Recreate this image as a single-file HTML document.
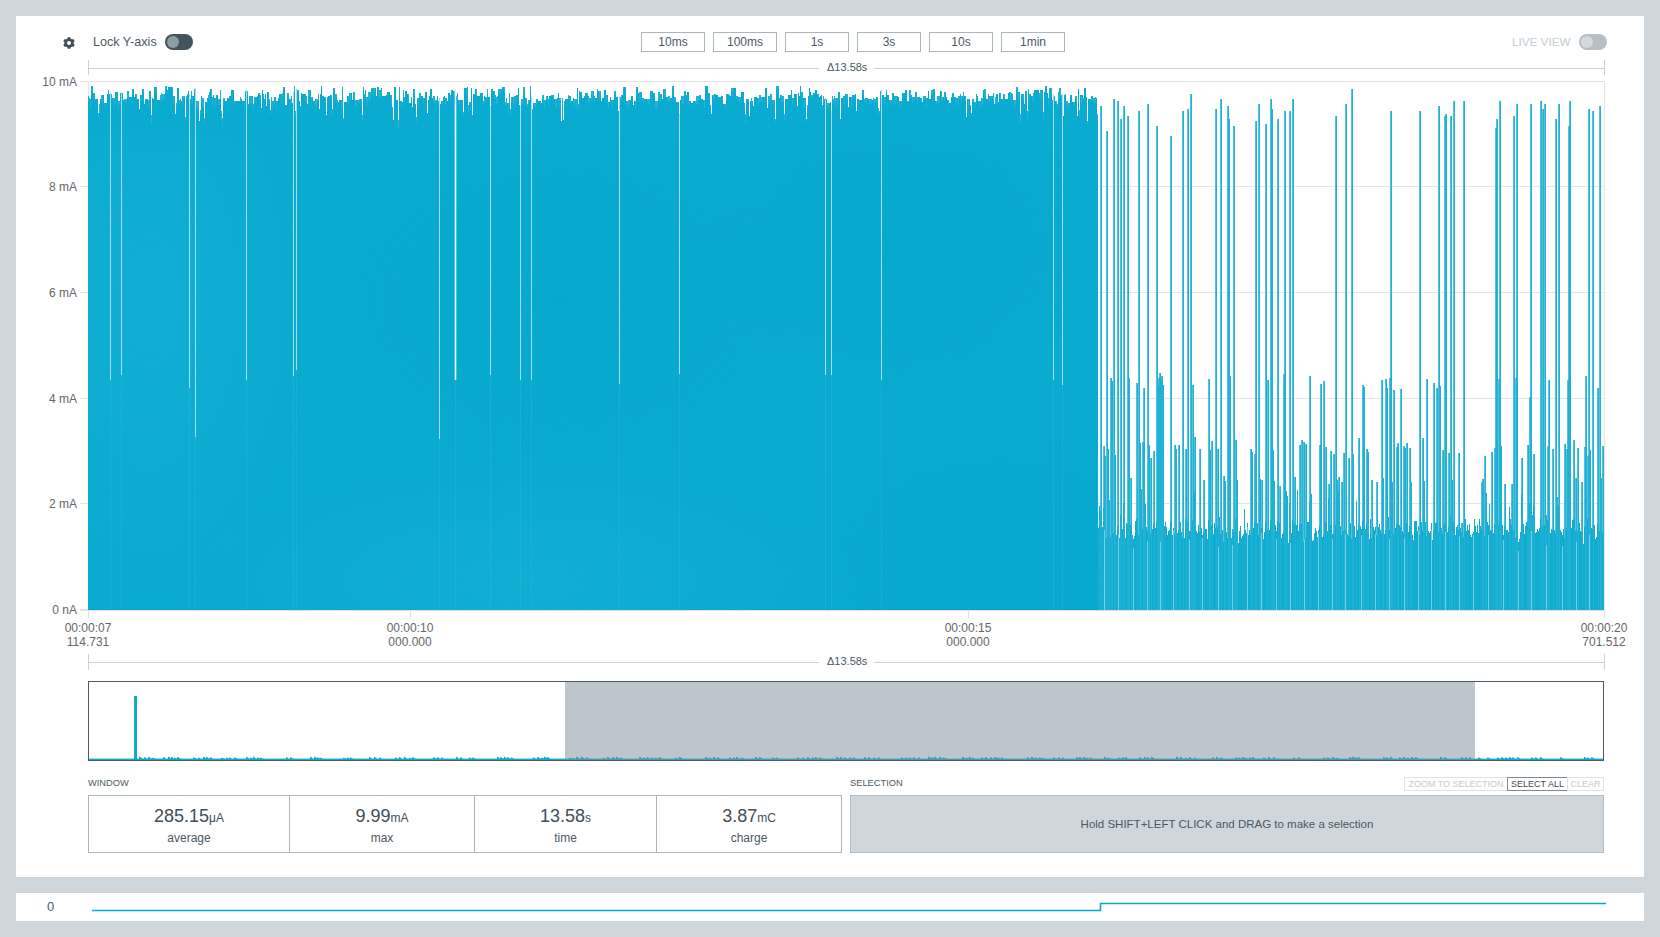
<!DOCTYPE html>
<html><head><meta charset="utf-8">
<style>
*{box-sizing:border-box;margin:0;padding:0}
html,body{width:1660px;height:937px;overflow:hidden;background:#cfd6dc;font-family:"Liberation Sans",sans-serif;color:#4a5963}
.abs{position:absolute}
.card{position:absolute;background:#fff}
.t{position:absolute;white-space:nowrap;line-height:1}
.btn{position:absolute;top:32px;width:64px;height:20px;border:1px solid #aab5bc;font-size:12px;line-height:18px;text-align:center;color:#4a5963}
.ax{position:absolute;font-size:12px;line-height:14px;color:#666;white-space:nowrap}
.stat{position:absolute;top:795px;height:58px;border:1px solid #a9b6bd;text-align:center}
.stat .v{position:absolute;left:0;right:0;top:10px;font-size:18px;line-height:20px;color:#3f4e58}
.stat .v small{font-size:12px}
.stat .l{position:absolute;left:0;right:0;top:35px;font-size:12px;line-height:14px;color:#4a5963}
.sb{position:absolute;top:777px;height:14px;font-size:9px;line-height:12px;border:1px solid #dde3e6;color:#c3cbd0;text-align:center}
</style></head><body>
<div class="card" style="left:16px;top:16px;width:1628px;height:861px"></div>
<div class="card" style="left:16px;top:893px;width:1628px;height:28px"></div>

<!-- gear -->
<svg class="abs" style="left:62px;top:36px" width="14" height="14" viewBox="0 0 14 14">
<path fill="#3f4e58" fill-rule="evenodd" d="M8.61 2.58L8.35 1.15L5.65 1.15L5.39 2.58L3.98 3.40L2.61 2.91L1.26 5.25L2.37 6.18L2.37 7.82L1.26 8.75L2.61 11.09L3.98 10.60L5.39 11.42L5.65 12.85L8.35 12.85L8.61 11.42L10.02 10.60L11.39 11.09L12.74 8.75L11.63 7.82L11.63 6.18L12.74 5.25L11.39 2.91L10.02 3.40ZM7 5A2 2 0 1 0 7 9A2 2 0 1 0 7 5Z"/>
</svg>
<div class="t" style="left:93px;top:36px;font-size:12.6px;color:#4a5963">Lock Y-axis</div>
<div class="abs" style="left:165px;top:34px;width:28px;height:16px;border-radius:8px;background:#44545e"></div>
<div class="abs" style="left:167px;top:36px;width:12px;height:12px;border-radius:6px;background:#8d9da5"></div>

<div class="btn" style="left:641px">10ms</div>
<div class="btn" style="left:713px">100ms</div>
<div class="btn" style="left:785px">1s</div>
<div class="btn" style="left:857px">3s</div>
<div class="btn" style="left:929px">10s</div>
<div class="btn" style="left:1001px">1min</div>

<div class="t" style="left:1512px;top:36px;font-size:11.7px;color:#c4cdd2">LIVE VIEW</div>
<div class="abs" style="left:1579px;top:34px;width:28px;height:16px;border-radius:8px;background:#b6bfc4"></div>
<div class="abs" style="left:1581px;top:36px;width:12px;height:12px;border-radius:6px;background:#d3d9dc"></div>

<!-- delta top -->
<svg class="abs" style="left:0;top:55px" width="1660" height="20" viewBox="0 55 1660 20">
<path d="M88 68.5H819M874 68.5H1605M88.5 60V76M1604.5 60V76" stroke="#c9d2d7" stroke-width="1"/>
</svg>
<div class="t" style="left:827px;top:62px;font-size:11px;color:#4a5963">Δ13.58s</div>

<svg class="abs" style="left:0;top:0" width="1660" height="700" viewBox="0 0 1660 700">
<path d="M80 81.5H1605M80 186.5H1605M80 292.5H1605M80 398.5H1605M80 503.5H1605M80 609.5H88" stroke="#e4e4e4" stroke-width="1" fill="none"/>
<path d="M1604.5 81V610M88.5 81V610" stroke="#e4e4e4" stroke-width="1"/>
<path d="M80 610.5H1605M88.5 610V618M410.5 610V618M968.5 610V618M1604.5 610V618" stroke="#e0e0e0" stroke-width="1"/>
<g fill="none" stroke-width="1">
<path d="M88.5 96V610M89.5 98V610M90.5 99V610M91.5 86V610M92.5 86V610M93.5 93V610M94.5 93V610M95.5 99V610M96.5 99V610M97.5 99V610M98.5 113V610M99.5 104V610M100.5 99V610M101.5 95V610M102.5 95V610M103.5 95V610M104.5 103V610M105.5 103V610M106.5 103V610M107.5 94V610M108.5 90V610M109.5 94V610M110.5 94V610M111.5 94V610M112.5 98V610M113.5 98V610M114.5 98V610M115.5 92V610M116.5 92V610M117.5 92V610M118.5 101V610M119.5 101V610M120.5 93V610M121.5 93V610M122.5 93V610M123.5 100V610M124.5 99V610M125.5 99V610M126.5 99V610M127.5 91V610M128.5 91V610M129.5 97V610M130.5 97V610M131.5 97V610M132.5 89V610M133.5 89V610M134.5 97V610M135.5 94V610M136.5 94V610M137.5 99V610M138.5 99V610M139.5 109V610M140.5 95V610M141.5 95V610M142.5 89V610M143.5 89V610M144.5 104V610M145.5 99V610M146.5 99V610M147.5 99V610M148.5 100V610M149.5 91V610M150.5 91V610M151.5 115V610M152.5 98V610M153.5 99V610M154.5 87V610M155.5 87V610M156.5 87V610M157.5 100V610M158.5 100V610M159.5 100V610M160.5 95V610M161.5 93V610M162.5 94V610M163.5 94V610M164.5 94V610M165.5 86V610M166.5 86V610M167.5 90V610M168.5 87V610M169.5 87V610M170.5 87V610M171.5 87V610M172.5 87V610M173.5 96V610M174.5 96V610M175.5 114V610M176.5 103V610M177.5 88V610M178.5 88V610M179.5 100V610M180.5 99V610M181.5 101V610M182.5 96V610M183.5 96V610M184.5 96V610M185.5 117V610M186.5 96V610M187.5 94V610M188.5 91V610M189.5 96V610M190.5 99V610M191.5 91V610M192.5 96V610M193.5 96V610M194.5 89V610M195.5 89V610M196.5 101V610M197.5 101V610M198.5 101V610M199.5 121V610M200.5 110V610M201.5 96V610M202.5 98V610M203.5 98V610M204.5 118V610M205.5 102V610M206.5 102V610M207.5 98V610M208.5 95V610M209.5 92V610M210.5 89V610M211.5 89V610M212.5 97V610M213.5 95V610M214.5 98V610M215.5 98V610M216.5 95V610M217.5 95V610M218.5 99V610M219.5 99V610M220.5 90V610M221.5 111V610M222.5 118V610M223.5 98V610M224.5 98V610M225.5 101V610M226.5 101V610M227.5 98V610M228.5 98V610M229.5 96V610M230.5 96V610M231.5 90V610M232.5 90V610M233.5 90V610M234.5 101V610M235.5 101V610M236.5 101V610M237.5 101V610M238.5 101V610M239.5 101V610M240.5 97V610M241.5 99V610M242.5 101V610M243.5 101V610M244.5 101V610M245.5 91V610M246.5 91V610M247.5 91V610M248.5 104V610M249.5 96V610M250.5 96V610M251.5 96V610M252.5 96V610M253.5 104V610M254.5 97V610M255.5 97V610M256.5 97V610M257.5 96V610M258.5 93V610M259.5 93V610M260.5 95V610M261.5 108V610M262.5 90V610M263.5 94V610M264.5 99V610M265.5 94V610M266.5 106V610M267.5 92V610M268.5 92V610M269.5 99V610M270.5 110V610M271.5 97V610M272.5 101V610M273.5 101V610M274.5 97V610M275.5 97V610M276.5 101V610M277.5 101V610M278.5 98V610M279.5 94V610M280.5 94V610M281.5 94V610M282.5 93V610M283.5 87V610M284.5 87V610M285.5 105V610M286.5 105V610M287.5 93V610M288.5 93V610M289.5 99V610M290.5 99V610M291.5 96V610M292.5 103V610M293.5 93V610M294.5 86V610M295.5 111V610M296.5 90V610M297.5 90V610M298.5 90V610M299.5 101V610M300.5 106V610M301.5 93V610M302.5 94V610M303.5 94V610M304.5 94V610M305.5 94V610M306.5 96V610M307.5 104V610M308.5 90V610M309.5 90V610M310.5 90V610M311.5 97V610M312.5 97V610M313.5 101V610M314.5 101V610M315.5 99V610M316.5 99V610M317.5 99V610M318.5 94V610M319.5 109V610M320.5 94V610M321.5 86V610M322.5 96V610M323.5 96V610M324.5 97V610M325.5 97V610M326.5 115V610M327.5 97V610M328.5 96V610M329.5 96V610M330.5 95V610M331.5 95V610M332.5 109V610M333.5 88V610M334.5 88V610M335.5 94V610M336.5 94V610M337.5 100V610M338.5 102V610M339.5 100V610M340.5 100V610M341.5 100V610M342.5 87V610M343.5 118V610M344.5 102V610M345.5 102V610M346.5 102V610M347.5 96V610M348.5 96V610M349.5 93V610M350.5 93V610M351.5 93V610M352.5 100V610M353.5 92V610M354.5 92V610M355.5 100V610M356.5 100V610M357.5 100V610M358.5 100V610M359.5 99V610M360.5 99V610M361.5 99V610M362.5 115V610M363.5 87V610M364.5 94V610M365.5 90V610M366.5 97V610M367.5 97V610M368.5 92V610M369.5 92V610M370.5 92V610M371.5 88V610M372.5 88V610M373.5 88V610M374.5 88V610M375.5 88V610M376.5 96V610M377.5 87V610M378.5 87V610M379.5 90V610M380.5 90V610M381.5 88V610M382.5 96V610M383.5 96V610M384.5 96V610M385.5 96V610M386.5 95V610M387.5 92V610M388.5 92V610M389.5 92V610M390.5 95V610M391.5 95V610M392.5 107V610M393.5 120V610M394.5 87V610M395.5 87V610M396.5 100V610M397.5 100V610M398.5 120V610M399.5 87V610M400.5 101V610M401.5 101V610M402.5 102V610M403.5 90V610M404.5 97V610M405.5 91V610M406.5 91V610M407.5 94V610M408.5 94V610M409.5 103V610M410.5 103V610M411.5 97V610M412.5 107V610M413.5 89V610M414.5 89V610M415.5 104V610M416.5 117V610M417.5 98V610M418.5 98V610M419.5 93V610M420.5 93V610M421.5 96V610M422.5 96V610M423.5 98V610M424.5 98V610M425.5 92V610M426.5 92V610M427.5 113V610M428.5 100V610M429.5 96V610M430.5 89V610M431.5 89V610M432.5 98V610M433.5 96V610M434.5 96V610M435.5 100V610M436.5 100V610M437.5 96V610M438.5 101V610M439.5 99V610M440.5 104V610M441.5 101V610M442.5 101V610M443.5 97V610M444.5 96V610M445.5 98V610M446.5 98V610M447.5 101V610M448.5 93V610M449.5 93V610M450.5 95V610M451.5 90V610M452.5 90V610M453.5 91V610M454.5 91V610M455.5 91V610M456.5 96V610M457.5 93V610M458.5 100V610M459.5 100V610M460.5 100V610M461.5 100V610M462.5 100V610M463.5 112V610M464.5 88V610M465.5 88V610M466.5 88V610M467.5 87V610M468.5 105V610M469.5 102V610M470.5 102V610M471.5 88V610M472.5 115V610M473.5 94V610M474.5 94V610M475.5 89V610M476.5 89V610M477.5 96V610M478.5 96V610M479.5 96V610M480.5 93V610M481.5 93V610M482.5 93V610M483.5 101V610M484.5 96V610M485.5 97V610M486.5 97V610M487.5 89V610M488.5 97V610M489.5 97V610M490.5 107V610M491.5 89V610M492.5 89V610M493.5 91V610M494.5 91V610M495.5 95V610M496.5 97V610M497.5 96V610M498.5 89V610M499.5 89V610M500.5 89V610M501.5 89V610M502.5 87V610M503.5 87V610M504.5 87V610M505.5 102V610M506.5 98V610M507.5 103V610M508.5 103V610M509.5 93V610M510.5 109V610M511.5 97V610M512.5 97V610M513.5 97V610M514.5 96V610M515.5 96V610M516.5 95V610M517.5 95V610M518.5 88V610M519.5 105V610M520.5 107V610M521.5 99V610M522.5 99V610M523.5 87V610M524.5 87V610M525.5 98V610M526.5 98V610M527.5 104V610M528.5 100V610M529.5 100V610M530.5 86V610M531.5 98V610M532.5 109V610M533.5 103V610M534.5 103V610M535.5 103V610M536.5 99V610M537.5 99V610M538.5 101V610M539.5 101V610M540.5 101V610M541.5 103V610M542.5 95V610M543.5 95V610M544.5 100V610M545.5 100V610M546.5 96V610M547.5 96V610M548.5 99V610M549.5 96V610M550.5 96V610M551.5 95V610M552.5 95V610M553.5 95V610M554.5 99V610M555.5 99V610M556.5 99V610M557.5 98V610M558.5 93V610M559.5 98V610M560.5 98V610M561.5 121V610M562.5 98V610M563.5 120V610M564.5 101V610M565.5 99V610M566.5 99V610M567.5 99V610M568.5 95V610M569.5 96V610M570.5 96V610M571.5 101V610M572.5 101V610M573.5 98V610M574.5 99V610M575.5 99V610M576.5 99V610M577.5 88V610M578.5 104V610M579.5 91V610M580.5 92V610M581.5 92V610M582.5 98V610M583.5 98V610M584.5 96V610M585.5 93V610M586.5 93V610M587.5 93V610M588.5 96V610M589.5 98V610M590.5 98V610M591.5 91V610M592.5 91V610M593.5 91V610M594.5 96V610M595.5 98V610M596.5 98V610M597.5 89V610M598.5 91V610M599.5 91V610M600.5 91V610M601.5 101V610M602.5 98V610M603.5 98V610M604.5 90V610M605.5 90V610M606.5 95V610M607.5 95V610M608.5 102V610M609.5 102V610M610.5 97V610M611.5 100V610M612.5 100V610M613.5 100V610M614.5 91V610M615.5 91V610M616.5 97V610M617.5 97V610M618.5 111V610M619.5 97V610M620.5 97V610M621.5 95V610M622.5 95V610M623.5 87V610M624.5 87V610M625.5 87V610M626.5 101V610M627.5 101V610M628.5 100V610M629.5 100V610M630.5 100V610M631.5 96V610M632.5 96V610M633.5 105V610M634.5 101V610M635.5 101V610M636.5 87V610M637.5 87V610M638.5 93V610M639.5 92V610M640.5 92V610M641.5 92V610M642.5 98V610M643.5 98V610M644.5 99V610M645.5 99V610M646.5 99V610M647.5 99V610M648.5 99V610M649.5 99V610M650.5 91V610M651.5 91V610M652.5 91V610M653.5 93V610M654.5 93V610M655.5 101V610M656.5 101V610M657.5 101V610M658.5 92V610M659.5 92V610M660.5 94V610M661.5 94V610M662.5 99V610M663.5 89V610M664.5 89V610M665.5 89V610M666.5 97V610M667.5 97V610M668.5 96V610M669.5 96V610M670.5 98V610M671.5 98V610M672.5 86V610M673.5 86V610M674.5 97V610M675.5 97V610M676.5 102V610M677.5 102V610M678.5 102V610M679.5 115V610M680.5 100V610M681.5 96V610M682.5 96V610M683.5 96V610M684.5 91V610M685.5 91V610M686.5 95V610M687.5 92V610M688.5 92V610M689.5 101V610M690.5 101V610M691.5 103V610M692.5 103V610M693.5 101V610M694.5 101V610M695.5 101V610M696.5 96V610M697.5 96V610M698.5 96V610M699.5 95V610M700.5 95V610M701.5 99V610M702.5 99V610M703.5 100V610M704.5 100V610M705.5 86V610M706.5 86V610M707.5 86V610M708.5 93V610M709.5 93V610M710.5 105V610M711.5 114V610M712.5 95V610M713.5 95V610M714.5 94V610M715.5 94V610M716.5 95V610M717.5 95V610M718.5 97V610M719.5 97V610M720.5 97V610M721.5 96V610M722.5 96V610M723.5 104V610M724.5 104V610M725.5 104V610M726.5 94V610M727.5 94V610M728.5 94V610M729.5 95V610M730.5 96V610M731.5 88V610M732.5 88V610M733.5 88V610M734.5 88V610M735.5 88V610M736.5 96V610M737.5 96V610M738.5 97V610M739.5 97V610M740.5 97V610M741.5 92V610M742.5 92V610M743.5 92V610M744.5 103V610M745.5 114V610M746.5 99V610M747.5 99V610M748.5 99V610M749.5 116V610M750.5 101V610M751.5 98V610M752.5 101V610M753.5 106V610M754.5 97V610M755.5 97V610M756.5 97V610M757.5 98V610M758.5 98V610M759.5 95V610M760.5 95V610M761.5 97V610M762.5 97V610M763.5 97V610M764.5 97V610M765.5 88V610M766.5 88V610M767.5 108V610M768.5 96V610M769.5 96V610M770.5 94V610M771.5 94V610M772.5 100V610M773.5 100V610M774.5 100V610M775.5 119V610M776.5 86V610M777.5 86V610M778.5 86V610M779.5 98V610M780.5 95V610M781.5 95V610M782.5 96V610M783.5 96V610M784.5 114V610M785.5 99V610M786.5 99V610M787.5 99V610M788.5 95V610M789.5 95V610M790.5 95V610M791.5 90V610M792.5 98V610M793.5 98V610M794.5 94V610M795.5 94V610M796.5 94V610M797.5 106V610M798.5 93V610M799.5 96V610M800.5 86V610M801.5 92V610M802.5 92V610M803.5 98V610M804.5 98V610M805.5 98V610M806.5 119V610M807.5 105V610M808.5 96V610M809.5 88V610M810.5 92V610M811.5 95V610M812.5 95V610M813.5 93V610M814.5 93V610M815.5 90V610M816.5 90V610M817.5 94V610M818.5 94V610M819.5 97V610M820.5 96V610M821.5 95V610M822.5 105V610M823.5 96V610M824.5 99V610M825.5 99V610M826.5 99V610M827.5 103V610M828.5 103V610M829.5 103V610M830.5 102V610M831.5 112V610M832.5 96V610M833.5 99V610M834.5 96V610M835.5 98V610M836.5 98V610M837.5 98V610M838.5 92V610M839.5 92V610M840.5 119V610M841.5 98V610M842.5 98V610M843.5 96V610M844.5 96V610M845.5 94V610M846.5 94V610M847.5 94V610M848.5 107V610M849.5 97V610M850.5 97V610M851.5 97V610M852.5 95V610M853.5 95V610M854.5 95V610M855.5 94V610M856.5 111V610M857.5 99V610M858.5 99V610M859.5 100V610M860.5 100V610M861.5 100V610M862.5 90V610M863.5 90V610M864.5 99V610M865.5 98V610M866.5 98V610M867.5 98V610M868.5 99V610M869.5 99V610M870.5 99V610M871.5 99V610M872.5 100V610M873.5 98V610M874.5 99V610M875.5 99V610M876.5 97V610M877.5 97V610M878.5 108V610M879.5 111V610M880.5 91V610M881.5 91V610M882.5 95V610M883.5 95V610M884.5 97V610M885.5 97V610M886.5 90V610M887.5 95V610M888.5 95V610M889.5 100V610M890.5 100V610M891.5 100V610M892.5 93V610M893.5 93V610M894.5 96V610M895.5 96V610M896.5 96V610M897.5 96V610M898.5 97V610M899.5 101V610M900.5 101V610M901.5 101V610M902.5 93V610M903.5 93V610M904.5 93V610M905.5 90V610M906.5 90V610M907.5 101V610M908.5 101V610M909.5 90V610M910.5 90V610M911.5 95V610M912.5 97V610M913.5 97V610M914.5 97V610M915.5 92V610M916.5 92V610M917.5 97V610M918.5 97V610M919.5 97V610M920.5 98V610M921.5 98V610M922.5 102V610M923.5 96V610M924.5 96V610M925.5 96V610M926.5 98V610M927.5 98V610M928.5 91V610M929.5 99V610M930.5 99V610M931.5 90V610M932.5 90V610M933.5 89V610M934.5 89V610M935.5 101V610M936.5 101V610M937.5 96V610M938.5 96V610M939.5 96V610M940.5 91V610M941.5 91V610M942.5 97V610M943.5 97V610M944.5 92V610M945.5 92V610M946.5 97V610M947.5 100V610M948.5 100V610M949.5 103V610M950.5 103V610M951.5 97V610M952.5 93V610M953.5 93V610M954.5 97V610M955.5 97V610M956.5 98V610M957.5 98V610M958.5 96V610M959.5 96V610M960.5 94V610M961.5 96V610M962.5 96V610M963.5 92V610M964.5 96V610M965.5 96V610M966.5 117V610M967.5 99V610M968.5 99V610M969.5 99V610M970.5 105V610M971.5 113V610M972.5 99V610M973.5 99V610M974.5 102V610M975.5 102V610M976.5 94V610M977.5 96V610M978.5 101V610M979.5 101V610M980.5 101V610M981.5 98V610M982.5 98V610M983.5 90V610M984.5 89V610M985.5 89V610M986.5 99V610M987.5 99V610M988.5 94V610M989.5 96V610M990.5 96V610M991.5 96V610M992.5 96V610M993.5 93V610M994.5 104V610M995.5 97V610M996.5 94V610M997.5 94V610M998.5 102V610M999.5 93V610M1000.5 93V610M1001.5 99V610M1002.5 99V610M1003.5 94V610M1004.5 94V610M1005.5 99V610M1006.5 99V610M1007.5 99V610M1008.5 93V610M1009.5 92V610M1010.5 92V610M1011.5 93V610M1012.5 94V610M1013.5 100V610M1014.5 100V610M1015.5 100V610M1016.5 87V610M1017.5 87V610M1018.5 92V610M1019.5 92V610M1020.5 114V610M1021.5 94V610M1022.5 94V610M1023.5 94V610M1024.5 104V610M1025.5 91V610M1026.5 91V610M1027.5 111V610M1028.5 89V610M1029.5 94V610M1030.5 94V610M1031.5 96V610M1032.5 96V610M1033.5 93V610M1034.5 90V610M1035.5 90V610M1036.5 90V610M1037.5 90V610M1038.5 90V610M1039.5 93V610M1040.5 90V610M1041.5 90V610M1042.5 90V610M1043.5 112V610M1044.5 92V610M1045.5 86V610M1046.5 86V610M1047.5 93V610M1048.5 98V610M1049.5 88V610M1050.5 88V610M1051.5 88V610M1052.5 100V610M1053.5 95V610M1054.5 96V610M1055.5 101V610M1056.5 101V610M1057.5 104V610M1058.5 92V610M1059.5 88V610M1060.5 88V610M1061.5 95V610M1062.5 95V610M1063.5 116V610M1064.5 95V610M1065.5 94V610M1066.5 101V610M1067.5 101V610M1068.5 103V610M1069.5 103V610M1070.5 95V610M1071.5 95V610M1072.5 102V610M1073.5 102V610M1074.5 102V610M1075.5 96V610M1076.5 96V610M1077.5 116V610M1078.5 89V610M1079.5 110V610M1080.5 95V610M1081.5 95V610M1082.5 95V610M1083.5 98V610M1084.5 88V610M1085.5 88V610M1086.5 97V610M1087.5 121V610M1088.5 99V610M1089.5 99V610M1090.5 99V610M1091.5 96V610M1092.5 96V610M1093.5 98V610M1094.5 98V610M1095.5 97V610M1096.5 98V610M1097.5 114V610" stroke="#0aabd0"/>
<path d="M88.5 96v6M90.5 99v9M91.5 86v3M92.5 86v7M94.5 93v9M98.5 113v4M99.5 104v9M101.5 95v7M102.5 95v9M104.5 103v3M108.5 90v6M110.5 94v7M111.5 94v5M113.5 98v3M114.5 98v9M118.5 101v9M119.5 101v3M124.5 99v3M125.5 99v4M126.5 99v3M127.5 91v7M128.5 91v8M132.5 89v7M136.5 94v5M141.5 95v6M143.5 89v4M145.5 99v3M148.5 100v7M151.5 115v9M156.5 87v5M160.5 95v7M161.5 93v8M162.5 94v5M163.5 94v6M164.5 94v6M165.5 86v6M166.5 86v4M172.5 87v9M173.5 96v7M176.5 103v6M179.5 100v3M182.5 96v9M183.5 96v3M185.5 117v4M187.5 94v6M189.5 96v9M190.5 99v6M191.5 91v4M192.5 96v7M194.5 89v4M195.5 89v3M196.5 101v6M197.5 101v7M198.5 101v9M200.5 110v6M202.5 98v9M203.5 98v5M204.5 118v5M207.5 98v5M208.5 95v4M209.5 92v8M211.5 89v8M212.5 97v9M215.5 98v9M218.5 99v6M219.5 99v6M220.5 90v7M221.5 111v9M222.5 118v9M223.5 98v4M224.5 98v3M229.5 96v4M234.5 101v3M240.5 97v5M244.5 101v9M247.5 91v4M250.5 96v8M251.5 96v7M253.5 104v6M255.5 97v5M259.5 93v8M263.5 94v3M269.5 99v3M270.5 110v4M271.5 97v5M272.5 101v9M274.5 97v8M276.5 101v9M281.5 94v9M282.5 93v4M283.5 87v3M287.5 93v3M288.5 93v4M290.5 99v4M291.5 96v7M293.5 93v9M294.5 86v8M295.5 111v6M298.5 90v3M300.5 106v4M306.5 96v6M308.5 90v7M309.5 90v8M311.5 97v6M313.5 101v3M315.5 99v6M316.5 99v8M317.5 99v4M318.5 94v6M325.5 97v8M331.5 95v3M332.5 109v7M333.5 88v4M335.5 94v5M336.5 94v4M337.5 100v7M341.5 100v7M343.5 118v3M348.5 96v8M349.5 93v7M350.5 93v6M354.5 92v8M355.5 100v7M356.5 100v6M358.5 100v4M359.5 99v4M361.5 99v7M362.5 115v5M363.5 87v4M364.5 94v5M366.5 97v4M367.5 97v9M368.5 92v7M369.5 92v9M370.5 92v8M371.5 88v6M373.5 88v9M374.5 88v4M378.5 87v8M379.5 90v8M380.5 90v7M391.5 95v9M392.5 107v6M398.5 120v9M399.5 87v7M401.5 101v6M403.5 90v5M404.5 97v6M408.5 94v8M411.5 97v4M414.5 89v6M416.5 117v5M417.5 98v9M419.5 93v5M420.5 93v6M423.5 98v5M433.5 96v5M434.5 96v8M435.5 100v3M438.5 101v5M442.5 101v4M445.5 98v7M450.5 95v5M451.5 90v3M454.5 91v5M459.5 100v4M462.5 100v4M463.5 112v3M466.5 88v8M468.5 105v6M469.5 102v3M470.5 102v8M473.5 94v3M476.5 89v6M482.5 93v4M483.5 101v3M484.5 96v7M486.5 97v3M487.5 89v7M490.5 107v9M491.5 89v3M494.5 91v4M495.5 95v4M496.5 97v8M497.5 96v7M498.5 89v4M499.5 89v6M500.5 89v4M504.5 87v7M505.5 102v4M506.5 98v7M508.5 103v9M510.5 109v7M511.5 97v6M513.5 97v8M514.5 96v8M516.5 95v6M520.5 107v4M521.5 99v6M522.5 99v5M523.5 87v5M524.5 87v7M526.5 98v8M527.5 104v3M528.5 100v5M530.5 86v6M531.5 98v4M532.5 109v5M534.5 103v4M535.5 103v4M536.5 99v5M542.5 95v5M543.5 95v8M544.5 100v8M546.5 96v6M548.5 99v6M553.5 95v5M555.5 99v7M556.5 99v9M559.5 98v9M560.5 98v9M562.5 98v8M564.5 101v6M568.5 95v4M570.5 96v7M574.5 99v8M575.5 99v4M576.5 99v9M578.5 104v6M585.5 93v5M588.5 96v6M589.5 98v8M591.5 91v9M592.5 91v8M593.5 91v5M594.5 96v7M597.5 89v3M599.5 91v9M600.5 91v6M606.5 95v6M608.5 102v6M612.5 100v9M614.5 91v3M620.5 97v5M621.5 95v5M623.5 87v8M627.5 101v7M628.5 100v6M629.5 100v5M635.5 101v8M636.5 87v8M639.5 92v9M640.5 92v8M643.5 98v4M647.5 99v3M648.5 99v5M649.5 99v4M651.5 91v8M654.5 93v4M655.5 101v8M656.5 101v8M657.5 101v5M658.5 92v8M659.5 92v7M660.5 94v8M664.5 89v8M665.5 89v6M667.5 97v4M668.5 96v5M669.5 96v6M670.5 98v3M672.5 86v3M674.5 97v3M675.5 97v6M677.5 102v4M679.5 115v6M682.5 96v8M683.5 96v8M685.5 91v6M689.5 101v5M695.5 101v4M696.5 96v8M697.5 96v9M698.5 96v4M699.5 95v4M704.5 100v8M707.5 86v4M709.5 93v4M710.5 105v7M713.5 95v3M714.5 94v7M718.5 97v3M722.5 96v5M725.5 104v4M726.5 94v6M728.5 94v3M731.5 88v5M732.5 88v9M736.5 96v3M739.5 97v5M740.5 97v3M744.5 103v5M745.5 114v9M747.5 99v4M751.5 98v7M758.5 98v8M759.5 95v8M760.5 95v7M761.5 97v5M764.5 97v5M768.5 96v8M769.5 96v3M770.5 94v7M771.5 94v7M773.5 100v4M775.5 119v3M776.5 86v4M778.5 86v9M781.5 95v8M782.5 96v6M783.5 96v6M784.5 114v7M792.5 98v7M796.5 94v8M802.5 92v6M804.5 98v9M806.5 119v3M807.5 105v3M811.5 95v4M812.5 95v3M818.5 94v8M822.5 105v5M823.5 96v5M826.5 99v6M827.5 103v7M828.5 103v5M831.5 112v8M832.5 96v5M833.5 99v6M834.5 96v7M835.5 98v9M836.5 98v3M837.5 98v5M838.5 92v7M844.5 96v8M846.5 94v6M847.5 94v5M851.5 97v9M852.5 95v4M859.5 100v4M862.5 90v5M864.5 99v4M866.5 98v4M869.5 99v6M870.5 99v5M871.5 99v5M873.5 98v3M874.5 99v7M875.5 99v4M877.5 97v6M878.5 108v7M880.5 91v7M884.5 97v7M886.5 90v4M890.5 100v5M892.5 93v9M895.5 96v9M896.5 96v5M899.5 101v7M901.5 101v8M902.5 93v5M909.5 90v4M910.5 90v9M912.5 97v6M914.5 97v4M916.5 92v8M917.5 97v8M921.5 98v4M923.5 96v4M924.5 96v5M926.5 98v9M931.5 90v4M932.5 90v5M936.5 101v3M937.5 96v6M938.5 96v7M939.5 96v7M941.5 91v8M942.5 97v4M944.5 92v9M948.5 100v5M953.5 93v5M955.5 97v6M956.5 98v8M958.5 96v9M959.5 96v3M960.5 94v7M961.5 96v6M963.5 92v6M965.5 96v5M968.5 99v7M971.5 113v3M972.5 99v4M975.5 102v5M976.5 94v7M979.5 101v7M981.5 98v7M982.5 98v8M984.5 89v8M985.5 89v9M989.5 96v7M991.5 96v3M993.5 93v9M995.5 97v8M996.5 94v9M1000.5 93v7M1003.5 94v7M1004.5 94v4M1010.5 92v8M1011.5 93v9M1014.5 100v9M1015.5 100v4M1016.5 87v3M1017.5 87v8M1018.5 92v9M1020.5 114v9M1021.5 94v4M1023.5 94v6M1026.5 91v5M1027.5 111v8M1028.5 89v4M1029.5 94v5M1032.5 96v6M1033.5 93v7M1039.5 93v5M1040.5 90v5M1041.5 90v9M1043.5 112v8M1046.5 86v3M1048.5 98v8M1049.5 88v9M1051.5 88v6M1054.5 96v3M1056.5 101v3M1057.5 104v5M1058.5 92v8M1059.5 88v9M1060.5 88v8M1061.5 95v6M1062.5 95v8M1066.5 101v4M1067.5 101v8M1069.5 103v7M1074.5 102v5M1075.5 96v3M1076.5 96v6M1079.5 110v4M1081.5 95v8M1087.5 121v4M1090.5 99v3M1091.5 96v4M1092.5 96v5M1093.5 98v3M1094.5 98v3M1095.5 97v7M1097.5 114v5" stroke="#21b2d5"/>
<g>
<defs>
<radialGradient id="gl1"><stop offset="0" stop-color="#22b6da" stop-opacity=".3"/><stop offset="1" stop-color="#22b6da" stop-opacity="0"/></radialGradient>
<radialGradient id="gd1"><stop offset="0" stop-color="#00a2cc" stop-opacity=".25"/><stop offset="1" stop-color="#00a2cc" stop-opacity="0"/></radialGradient>
<linearGradient id="mg" x1="0" y1="0" x2="0" y2="1"><stop offset="0" stop-color="#fff" stop-opacity="0"/><stop offset=".1" stop-color="#fff" stop-opacity="1"/></linearGradient><mask id="dm"><rect x="88" y="105" width="1011" height="505" fill="url(#mg)"/></mask>
</defs>
<g mask="url(#dm)">
<ellipse cx="150" cy="300" rx="170" ry="320" fill="url(#gl1)"/>
<ellipse cx="520" cy="580" rx="330" ry="120" fill="url(#gl1)"/>
<ellipse cx="560" cy="300" rx="260" ry="180" fill="url(#gd1)"/>
<ellipse cx="1000" cy="560" rx="220" ry="140" fill="url(#gd1)"/>
<ellipse cx="900" cy="250" rx="200" ry="160" fill="url(#gd1)"/>
</g>
</g>
<path d="M110.5 93V380M121.5 92V375M189.5 95V388M195.5 88V437M246.5 90V380M293.5 92V376M296.5 89V370M439.5 98V439M455.5 90V380M490.5 106V375M520.5 106V380M531.5 97V380M619.5 96V384M679.5 114V374M825.5 98V375M831.5 111V375M881.5 90V380M1053.5 94V380M1062.5 94V385" stroke="#a6dcec"/><path d="M455.5 91V380" stroke="#f4fbfd" stroke-width="1.6"/>
<path d="M110.5 380V610M121.5 375V610M189.5 388V610M195.5 437V610M246.5 380V610M293.5 376V610M296.5 370V610M439.5 439V610M455.5 380V610M490.5 375V610M520.5 380V610M531.5 380V610M619.5 384V610M679.5 374V610M825.5 375V610M831.5 375V610M881.5 380V610M1053.5 380V610M1062.5 385V610" stroke="#3bbad9" stroke-opacity=".35"/>
<path d="M1103.5 446V610M1104.5 456V610M1107.5 449V610M1110.5 378V610M1111.5 381V610M1114.5 455V610M1128.5 378V610M1130.5 478V610M1136.5 383V610M1139.5 443V610M1142.5 442V610M1143.5 388V610M1148.5 445V610M1150.5 458V610M1153.5 451V610M1157.5 385V610M1158.5 378V610M1159.5 373V610M1160.5 380V610M1161.5 376V610M1162.5 385V610M1174.5 445V610M1175.5 449V610M1178.5 445V610M1185.5 449V610M1192.5 385V610M1194.5 437V610M1199.5 449V610M1203.5 480V610M1208.5 379V610M1209.5 450V610M1211.5 441V610M1217.5 449V610M1223.5 476V610M1224.5 481V610M1229.5 376V610M1235.5 440V610M1236.5 480V610M1250.5 449V610M1251.5 452V610M1254.5 454V610M1259.5 479V610M1261.5 480V610M1267.5 380V610M1272.5 450V610M1273.5 481V610M1279.5 486V610M1283.5 374V610M1294.5 477V610M1299.5 445V610M1301.5 440V610M1303.5 442V610M1305.5 444V610M1309.5 376V610M1319.5 445V610M1320.5 384V610M1323.5 381V610M1325.5 447V610M1328.5 484V610M1330.5 451V610M1333.5 454V610M1336.5 480V610M1338.5 477V610M1341.5 482V610M1343.5 453V610M1348.5 458V610M1352.5 454V610M1358.5 438V610M1362.5 385V610M1363.5 387V610M1366.5 449V610M1367.5 452V610M1371.5 480V610M1376.5 482V610M1381.5 380V610M1382.5 478V610M1385.5 379V610M1386.5 388V610M1389.5 378V610M1391.5 482V610M1393.5 390V610M1396.5 447V610M1397.5 443V610M1400.5 389V610M1403.5 446V610M1404.5 448V610M1406.5 443V610M1409.5 448V610M1410.5 482V610M1422.5 438V610M1423.5 481V610M1426.5 379V610M1433.5 383V610M1436.5 388V610M1439.5 386V610M1442.5 450V610M1445.5 393V610M1448.5 453V610M1451.5 480V610M1458.5 453V610M1461.5 523V610M1481.5 482V610M1482.5 479V610M1484.5 456V610M1491.5 452V610M1494.5 448V610M1498.5 379V610M1500.5 446V610M1504.5 484V610M1511.5 484V610M1515.5 378V610M1521.5 458V610M1527.5 445V610M1529.5 397V610M1533.5 454V610M1547.5 446V610M1548.5 380V610M1552.5 449V610M1564.5 444V610M1566.5 449V610M1567.5 380V610M1573.5 440V610M1575.5 478V610M1577.5 448V610M1581.5 482V610M1584.5 447V610M1585.5 376V610M1587.5 456V610M1589.5 450V610M1597.5 388V610M1600.5 478V610M1602.5 446V610M1100.5 106V610M1106.5 131V610M1113.5 99V610M1117.5 101V610M1120.5 119V610M1123.5 106V610M1127.5 116V610M1138.5 111V610M1147.5 104V610M1156.5 126V610M1170.5 136V610M1182.5 111V610M1187.5 109V610M1190.5 94V610M1215.5 109V610M1220.5 99V610M1227.5 106V610M1228.5 119V610M1233.5 126V610M1255.5 121V610M1258.5 104V610M1265.5 124V610M1270.5 99V610M1271.5 109V610M1277.5 119V610M1284.5 111V610M1289.5 111V610M1292.5 99V610M1335.5 116V610M1345.5 104V610M1351.5 89V610M1390.5 111V610M1419.5 111V610M1438.5 106V610M1444.5 116V610M1445.5 114V610M1450.5 116V610M1453.5 101V610M1463.5 101V610M1495.5 128V610M1496.5 119V610M1499.5 101V610M1513.5 116V610M1516.5 104V610M1530.5 104V610M1540.5 101V610M1542.5 109V610M1544.5 104V610M1555.5 119V610M1558.5 104V610M1568.5 126V610M1569.5 101V610M1588.5 109V610M1592.5 111V610M1599.5 106V610" stroke="#52c2de"/>
<path d="M1098.5 528V610M1099.5 524V610M1100.5 526V610M1101.5 518V610M1102.5 527V610M1103.5 534V610M1104.5 527V610M1105.5 526V610M1106.5 538V610M1107.5 531V610M1108.5 527V610M1109.5 528V610M1110.5 538V610M1111.5 537V610M1112.5 538V610M1113.5 533V610M1114.5 527V610M1115.5 524V610M1116.5 535V610M1117.5 526V610M1118.5 532V610M1119.5 538V610M1120.5 530V610M1121.5 526V610M1122.5 529V610M1123.5 527V610M1124.5 532V610M1125.5 538V610M1126.5 523V610M1127.5 532V610M1128.5 531V610M1129.5 534V610M1130.5 525V610M1131.5 530V610M1132.5 535V610M1133.5 539V610M1134.5 536V610M1135.5 521V610M1136.5 519V610M1137.5 523V610M1138.5 535V610M1139.5 534V610M1140.5 529V610M1141.5 532V610M1142.5 529V610M1143.5 526V610M1144.5 531V610M1145.5 528V610M1146.5 527V610M1147.5 531V610M1148.5 530V610M1149.5 532V610M1150.5 534V610M1151.5 532V610M1152.5 529V610M1153.5 523V610M1154.5 533V610M1155.5 528V610M1156.5 522V610M1157.5 528V610M1158.5 530V610M1159.5 527V610M1160.5 533V610M1161.5 527V610M1162.5 534V610M1163.5 530V610M1164.5 526V610M1165.5 524V610M1166.5 527V610M1167.5 535V610M1168.5 531V610M1169.5 530V610M1170.5 522V610M1171.5 533V610M1172.5 535V610M1173.5 528V610M1174.5 534V610M1175.5 524V610M1176.5 538V610M1177.5 533V610M1178.5 531V610M1179.5 525V610M1180.5 533V610M1181.5 532V610M1182.5 538V610M1183.5 534V610M1184.5 538V610M1185.5 534V610M1186.5 540V610M1187.5 521V610M1188.5 530V610M1189.5 531V610M1190.5 531V610M1191.5 535V610M1192.5 525V610M1193.5 520V610M1194.5 537V610M1195.5 524V610M1196.5 531V610M1197.5 533V610M1198.5 525V610M1199.5 532V610M1200.5 532V610M1201.5 528V610M1202.5 535V610M1203.5 532V610M1204.5 527V610M1205.5 529V610M1206.5 529V610M1207.5 539V610M1208.5 520V610M1209.5 534V610M1210.5 536V610M1211.5 525V610M1212.5 537V610M1213.5 534V610M1214.5 523V610M1215.5 528V610M1216.5 529V610M1217.5 527V610M1218.5 538V610M1219.5 519V610M1220.5 534V610M1221.5 519V610M1222.5 530V610M1223.5 542V610M1224.5 525V610M1225.5 534V610M1226.5 532V610M1227.5 538V610M1228.5 537V610M1229.5 540V610M1230.5 536V610M1231.5 538V610M1232.5 536V610M1233.5 532V610M1234.5 529V610M1235.5 530V610M1236.5 525V610M1237.5 525V610M1238.5 543V610M1239.5 531V610M1240.5 526V610M1241.5 538V610M1242.5 536V610M1243.5 534V610M1244.5 520V610M1245.5 530V610M1246.5 533V610M1247.5 523V610M1248.5 535V610M1249.5 530V610M1250.5 535V610M1251.5 532V610M1252.5 531V610M1253.5 528V610M1254.5 522V610M1255.5 534V610M1256.5 522V610M1257.5 523V610M1258.5 535V610M1259.5 536V610M1260.5 529V610M1261.5 528V610M1262.5 526V610M1263.5 539V610M1264.5 532V610M1265.5 522V610M1266.5 529V610M1267.5 530V610M1268.5 525V610M1269.5 530V610M1270.5 520V610M1271.5 533V610M1272.5 526V610M1273.5 531V610M1274.5 533V610M1275.5 525V610M1276.5 531V610M1277.5 521V610M1278.5 527V610M1279.5 523V610M1280.5 532V610M1281.5 538V610M1282.5 534V610M1283.5 532V610M1284.5 538V610M1285.5 533V610M1286.5 526V610M1287.5 539V610M1288.5 543V610M1289.5 532V610M1290.5 534V610M1291.5 533V610M1292.5 520V610M1293.5 535V610M1294.5 524V610M1295.5 543V610M1296.5 525V610M1297.5 532V610M1298.5 531V610M1299.5 524V610M1300.5 524V610M1301.5 524V610M1302.5 538V610M1303.5 542V610M1304.5 537V610M1305.5 538V610M1306.5 531V610M1307.5 522V610M1308.5 522V610M1309.5 535V610M1310.5 527V610M1311.5 543V610M1312.5 541V610M1313.5 540V610M1314.5 533V610M1315.5 528V610M1316.5 531V610M1317.5 537V610M1318.5 530V610M1319.5 526V610M1320.5 526V610M1321.5 520V610M1322.5 537V610M1323.5 535V610M1324.5 523V610M1325.5 522V610M1326.5 533V610M1327.5 531V610M1328.5 527V610M1329.5 528V610M1330.5 525V610M1331.5 539V610M1332.5 534V610M1333.5 533V610M1334.5 523V610M1335.5 525V610M1336.5 533V610M1337.5 535V610M1338.5 533V610M1339.5 541V610M1340.5 526V610M1341.5 535V610M1342.5 534V610M1343.5 531V610M1344.5 531V610M1345.5 531V610M1346.5 522V610M1347.5 534V610M1348.5 536V610M1349.5 535V610M1350.5 523V610M1351.5 539V610M1352.5 537V610M1353.5 534V610M1354.5 526V610M1355.5 537V610M1356.5 524V610M1357.5 530V610M1358.5 525V610M1359.5 541V610M1360.5 526V610M1361.5 529V610M1362.5 521V610M1363.5 526V610M1364.5 533V610M1365.5 529V610M1366.5 536V610M1367.5 532V610M1368.5 529V610M1369.5 539V610M1370.5 519V610M1371.5 538V610M1372.5 529V610M1373.5 527V610M1374.5 530V610M1375.5 527V610M1376.5 535V610M1377.5 522V610M1378.5 533V610M1379.5 529V610M1380.5 530V610M1381.5 533V610M1382.5 544V610M1383.5 528V610M1384.5 534V610M1385.5 530V610M1386.5 534V610M1387.5 533V610M1388.5 535V610M1389.5 530V610M1390.5 522V610M1391.5 534V610M1392.5 530V610M1393.5 534V610M1394.5 524V610M1395.5 528V610M1396.5 524V610M1397.5 539V610M1398.5 528V610M1399.5 525V610M1400.5 527V610M1401.5 529V610M1402.5 531V610M1403.5 533V610M1404.5 529V610M1405.5 520V610M1406.5 523V610M1407.5 521V610M1408.5 532V610M1409.5 526V610M1410.5 528V610M1411.5 535V610M1412.5 535V610M1413.5 540V610M1414.5 521V610M1415.5 521V610M1416.5 521V610M1417.5 531V610M1418.5 526V610M1419.5 535V610M1420.5 533V610M1421.5 522V610M1422.5 531V610M1423.5 525V610M1424.5 531V610M1425.5 522V610M1426.5 536V610M1427.5 537V610M1428.5 531V610M1429.5 533V610M1430.5 531V610M1431.5 523V610M1432.5 540V610M1433.5 530V610M1434.5 540V610M1435.5 523V610M1436.5 522V610M1437.5 534V610M1438.5 532V610M1439.5 520V610M1440.5 528V610M1441.5 528V610M1442.5 533V610M1443.5 540V610M1444.5 524V610M1445.5 522V610M1446.5 529V610M1447.5 532V610M1448.5 527V610M1449.5 528V610M1450.5 532V610M1451.5 541V610M1452.5 535V610M1453.5 522V610M1454.5 535V610M1455.5 535V610M1456.5 527V610M1457.5 532V610M1458.5 530V610M1459.5 534V610M1460.5 528V610M1461.5 532V610M1462.5 530V610M1463.5 537V610M1464.5 531V610M1465.5 519V610M1466.5 531V610M1467.5 525V610M1468.5 530V610M1469.5 524V610M1470.5 535V610M1471.5 537V610M1472.5 534V610M1473.5 532V610M1474.5 519V610M1475.5 526V610M1476.5 532V610M1477.5 525V610M1478.5 533V610M1479.5 519V610M1480.5 526V610M1481.5 529V610M1482.5 542V610M1483.5 532V610M1484.5 536V610M1485.5 530V610M1486.5 518V610M1487.5 522V610M1488.5 525V610M1489.5 529V610M1490.5 530V610M1491.5 531V610M1492.5 535V610M1493.5 533V610M1494.5 524V610M1495.5 532V610M1496.5 523V610M1497.5 520V610M1498.5 525V610M1499.5 533V610M1500.5 529V610M1501.5 522V610M1502.5 525V610M1503.5 535V610M1504.5 526V610M1505.5 525V610M1506.5 530V610M1507.5 530V610M1508.5 532V610M1509.5 536V610M1510.5 519V610M1511.5 525V610M1512.5 520V610M1513.5 530V610M1514.5 532V610M1515.5 538V610M1516.5 534V610M1517.5 524V610M1518.5 542V610M1519.5 539V610M1520.5 532V610M1521.5 524V610M1522.5 525V610M1523.5 524V610M1524.5 534V610M1525.5 526V610M1526.5 522V610M1527.5 529V610M1528.5 531V610M1529.5 525V610M1530.5 523V610M1531.5 526V610M1532.5 529V610M1533.5 532V610M1534.5 530V610M1535.5 533V610M1536.5 532V610M1537.5 529V610M1538.5 531V610M1539.5 528V610M1540.5 519V610M1541.5 530V610M1542.5 526V610M1543.5 527V610M1544.5 525V610M1545.5 526V610M1546.5 534V610M1547.5 520V610M1548.5 538V610M1549.5 532V610M1550.5 533V610M1551.5 529V610M1552.5 530V610M1553.5 527V610M1554.5 530V610M1555.5 533V610M1556.5 524V610M1557.5 521V610M1558.5 539V610M1559.5 531V610M1560.5 530V610M1561.5 532V610M1562.5 535V610M1563.5 529V610M1564.5 538V610M1565.5 525V610M1566.5 528V610M1567.5 537V610M1568.5 534V610M1569.5 530V610M1570.5 520V610M1571.5 528V610M1572.5 520V610M1573.5 519V610M1574.5 532V610M1575.5 531V610M1576.5 534V610M1577.5 531V610M1578.5 528V610M1579.5 523V610M1580.5 531V610M1581.5 532V610M1582.5 530V610M1583.5 544V610M1584.5 527V610M1585.5 525V610M1586.5 521V610M1587.5 519V610M1588.5 518V610M1589.5 532V610M1590.5 520V610M1591.5 528V610M1592.5 529V610M1593.5 525V610M1594.5 525V610M1595.5 539V610M1596.5 537V610M1597.5 524V610M1598.5 534V610M1599.5 531V610M1600.5 527V610M1601.5 525V610M1602.5 532V610M1603.5 533V610" stroke="#12acd1"/>
<path d="M1099.5 506V610M1100.5 510V610M1103.5 508V610M1107.5 522V610M1109.5 500V610M1111.5 518V610M1120.5 515V610M1123.5 503V610M1127.5 524V610M1131.5 507V610M1141.5 489V610M1145.5 504V610M1158.5 495V610M1165.5 522V610M1176.5 501V610M1180.5 522V610M1185.5 519V610M1188.5 506V610M1192.5 520V610M1194.5 491V610M1219.5 517V610M1232.5 529V610M1235.5 519V610M1244.5 509V610M1260.5 514V610M1271.5 507V610M1274.5 526V610M1278.5 522V610M1280.5 498V610M1286.5 491V610M1287.5 496V610M1289.5 503V610M1297.5 490V610M1299.5 524V610M1302.5 513V610M1309.5 501V610M1310.5 508V610M1311.5 494V610M1320.5 527V610M1328.5 498V610M1329.5 510V610M1338.5 491V610M1356.5 501V610M1363.5 516V610M1366.5 522V610M1377.5 520V610M1378.5 527V610M1379.5 524V610M1382.5 517V610M1383.5 516V610M1388.5 517V610M1391.5 526V610M1407.5 528V610M1424.5 510V610M1434.5 488V610M1439.5 490V610M1450.5 516V610M1457.5 525V610M1459.5 501V610M1467.5 526V610M1486.5 493V610M1489.5 504V610M1492.5 524V610M1509.5 507V610M1510.5 528V610M1521.5 494V610M1527.5 521V610M1529.5 503V610M1532.5 515V610M1533.5 506V610M1540.5 525V610M1546.5 515V610M1548.5 512V610M1549.5 490V610M1557.5 497V610M1558.5 506V610M1559.5 494V610M1565.5 521V610M1578.5 507V610M1585.5 525V610" stroke="#1aafd3"/>
<path d="M1104.5 446V610M1105.5 456V610M1108.5 449V610M1111.5 378V610M1112.5 381V610M1115.5 455V610M1129.5 378V610M1131.5 478V610M1137.5 383V610M1140.5 443V610M1143.5 442V610M1144.5 388V610M1149.5 445V610M1151.5 458V610M1154.5 451V610M1158.5 385V610M1159.5 378V610M1160.5 373V610M1161.5 380V610M1162.5 376V610M1163.5 385V610M1175.5 445V610M1176.5 449V610M1179.5 445V610M1186.5 449V610M1193.5 385V610M1195.5 437V610M1200.5 449V610M1204.5 480V610M1209.5 379V610M1210.5 450V610M1212.5 441V610M1218.5 449V610M1224.5 476V610M1225.5 481V610M1230.5 376V610M1236.5 440V610M1237.5 480V610M1251.5 449V610M1252.5 452V610M1255.5 454V610M1260.5 479V610M1262.5 480V610M1268.5 380V610M1273.5 450V610M1274.5 481V610M1280.5 486V610M1284.5 374V610M1295.5 477V610M1300.5 445V610M1302.5 440V610M1304.5 442V610M1306.5 444V610M1310.5 376V610M1320.5 445V610M1321.5 384V610M1324.5 381V610M1326.5 447V610M1329.5 484V610M1331.5 451V610M1334.5 454V610M1337.5 480V610M1339.5 477V610M1342.5 482V610M1344.5 453V610M1349.5 458V610M1353.5 454V610M1359.5 438V610M1363.5 385V610M1364.5 387V610M1367.5 449V610M1368.5 452V610M1372.5 480V610M1377.5 482V610M1382.5 380V610M1383.5 478V610M1386.5 379V610M1387.5 388V610M1390.5 378V610M1392.5 482V610M1394.5 390V610M1397.5 447V610M1398.5 443V610M1401.5 389V610M1404.5 446V610M1405.5 448V610M1407.5 443V610M1410.5 448V610M1411.5 482V610M1423.5 438V610M1424.5 481V610M1427.5 379V610M1434.5 383V610M1437.5 388V610M1440.5 386V610M1443.5 450V610M1446.5 393V610M1449.5 453V610M1452.5 480V610M1459.5 453V610M1462.5 523V610M1482.5 482V610M1483.5 479V610M1485.5 456V610M1492.5 452V610M1495.5 448V610M1499.5 379V610M1501.5 446V610M1505.5 484V610M1512.5 484V610M1516.5 378V610M1522.5 458V610M1528.5 445V610M1530.5 397V610M1534.5 454V610M1548.5 446V610M1549.5 380V610M1553.5 449V610M1565.5 444V610M1567.5 449V610M1568.5 380V610M1574.5 440V610M1576.5 478V610M1578.5 448V610M1582.5 482V610M1585.5 447V610M1586.5 376V610M1588.5 456V610M1590.5 450V610M1598.5 388V610M1601.5 478V610M1603.5 446V610M1101.5 106V610M1107.5 131V610M1114.5 99V610M1118.5 101V610M1121.5 119V610M1124.5 106V610M1128.5 116V610M1139.5 111V610M1148.5 104V610M1157.5 126V610M1171.5 136V610M1183.5 111V610M1188.5 109V610M1191.5 94V610M1216.5 109V610M1221.5 99V610M1228.5 106V610M1229.5 119V610M1234.5 126V610M1256.5 121V610M1259.5 104V610M1266.5 124V610M1271.5 99V610M1272.5 109V610M1278.5 119V610M1285.5 111V610M1290.5 111V610M1293.5 99V610M1336.5 116V610M1346.5 104V610M1352.5 89V610M1391.5 111V610M1420.5 111V610M1439.5 106V610M1445.5 116V610M1446.5 114V610M1451.5 116V610M1454.5 101V610M1464.5 101V610M1496.5 128V610M1497.5 119V610M1500.5 101V610M1514.5 116V610M1517.5 104V610M1531.5 104V610M1541.5 101V610M1543.5 109V610M1545.5 104V610M1556.5 119V610M1559.5 104V610M1569.5 126V610M1570.5 101V610M1589.5 109V610M1593.5 111V610M1600.5 106V610" stroke="#20b2d5"/>
<path d="M1104.5 530V610M1118.5 535V610M1133.5 548V610M1147.5 541V610M1160.5 542V610M1173.5 531V610M1189.5 539V610M1202.5 538V610M1218.5 547V610M1232.5 545V610M1247.5 527V610M1261.5 533V610M1276.5 539V610M1290.5 543V610M1304.5 539V610M1318.5 533V610M1332.5 539V610M1345.5 534V610M1361.5 535V610M1375.5 534V610M1389.5 539V610M1404.5 538V610M1418.5 531V610M1431.5 530V610M1445.5 532V610M1459.5 536V610M1473.5 535V610M1488.5 535V610M1503.5 540V610M1518.5 551V610M1531.5 531V610M1546.5 545V610M1562.5 546V610M1576.5 542V610M1589.5 535V610" stroke="#8fd6e8" stroke-opacity=".8"/>
</g>
</svg>

<div class="ax" style="left:30px;top:75px;width:47px;text-align:right">10 mA</div>
<div class="ax" style="left:30px;top:180px;width:47px;text-align:right">8 mA</div>
<div class="ax" style="left:30px;top:286px;width:47px;text-align:right">6 mA</div>
<div class="ax" style="left:30px;top:392px;width:47px;text-align:right">4 mA</div>
<div class="ax" style="left:30px;top:497px;width:47px;text-align:right">2 mA</div>
<div class="ax" style="left:30px;top:603px;width:47px;text-align:right">0 nA</div>

<div class="ax" style="left:38px;top:621px;width:100px;text-align:center">00:00:07<br>114.731</div>
<div class="ax" style="left:360px;top:621px;width:100px;text-align:center">00:00:10<br>000.000</div>
<div class="ax" style="left:918px;top:621px;width:100px;text-align:center">00:00:15<br>000.000</div>
<div class="ax" style="left:1554px;top:621px;width:100px;text-align:center">00:00:20<br>701.512</div>

<!-- delta bottom -->
<svg class="abs" style="left:0;top:650px" width="1660" height="20" viewBox="0 650 1660 20">
<path d="M88 662.5H819M874 662.5H1605M88.5 654V670M1604.5 654V670" stroke="#c9d2d7" stroke-width="1"/>
</svg>
<div class="t" style="left:827px;top:656px;font-size:11px;color:#4a5963">Δ13.58s</div>

<svg class="abs" style="left:0;top:670px" width="1660" height="100" viewBox="0 670 1660 100">
<g fill="#0eabd0">
<rect x="89" y="758.6" width="1514" height="1.8"/>
<path d="M139 759V756.8h1l3 2.2zM144 759V757.2h1l2 1.8zM148 759V756.9h1l3 2.1zM152 759V757.7h1l3 1.3zM163 759V756.9h1l2 2.1zM168 759V756.7h1l2 2.3zM171 759V756.9h1l2 2.1zM174 759V757.8h1l2 1.2zM177 759V756.9h1l3 2.1zM193 759V757.5h1l3 1.5zM198 759V757.8h1l2 1.2zM203 759V757.1h1l3 1.9zM206 759V757.0h1l3 2.0zM210 759V757.2h1l2 1.8zM221 759V757.7h1l3 1.3zM226 759V757.7h1l2 1.3zM229 759V757.6h1l2 1.4zM234 759V757.4h1l3 1.6zM246 759V757.1h1l3 1.9zM250 759V757.7h1l3 1.3zM253 759V756.7h1l2 2.3zM257 759V757.5h1l2 1.5zM260 759V757.7h1l3 1.3zM286 759V757.3h1l2 1.7zM290 759V757.3h1l3 1.7zM310 759V756.7h1l2 2.3zM314 759V756.8h1l3 2.2zM317 759V757.6h1l3 1.4zM320 759V757.8h1l2 1.2zM343 759V757.8h1l3 1.2zM347 759V757.4h1l2 1.6zM350 759V757.6h1l2 1.4zM369 759V757.1h1l2 1.9zM374 759V756.9h1l2 2.1zM379 759V757.6h1l2 1.4zM395 759V757.5h1l2 1.5zM399 759V757.0h1l2 2.0zM404 759V756.8h1l2 2.2zM409 759V757.7h1l2 1.3zM412 759V757.2h1l3 1.8zM433 759V757.3h1l3 1.7zM437 759V757.2h1l2 1.8zM441 759V757.5h1l2 1.5zM456 759V757.0h1l2 2.0zM460 759V757.3h1l2 1.7zM469 759V757.5h1l2 1.5zM472 759V757.4h1l3 1.6zM497 759V756.8h1l2 2.2zM500 759V757.3h1l3 1.7zM504 759V756.7h1l2 2.3zM507 759V757.3h1l3 1.7zM511 759V757.6h1l2 1.4zM533 759V757.4h1l2 1.6zM537 759V756.9h1l3 2.1zM541 759V757.7h1l3 1.3zM544 759V756.8h1l3 2.2zM547 759V756.9h1l2 2.1zM569 759V757.8h1l2 1.2zM572 759V757.7h1l2 1.3zM576 759V756.8h1l3 2.2zM581 759V756.8h1l3 2.2zM586 759V757.3h1l2 1.7zM603 759V757.7h1l2 1.3zM607 759V756.7h1l2 2.3zM612 759V756.9h1l3 2.1zM616 759V756.8h1l3 2.2zM620 759V757.6h1l2 1.4zM639 759V756.8h1l3 2.2zM643 759V757.4h1l3 1.6zM647 759V757.1h1l2 1.9zM651 759V757.4h1l3 1.6zM655 759V757.7h1l3 1.3zM659 759V756.9h1l2 2.1zM675 759V757.7h1l3 1.3zM679 759V756.8h1l3 2.2zM705 759V757.1h1l3 1.9zM709 759V757.7h1l2 1.3zM713 759V756.8h1l2 2.2zM717 759V757.2h1l3 1.8zM729 759V757.3h1l2 1.7zM733 759V757.5h1l2 1.5zM736 759V756.7h1l2 2.3zM741 759V757.7h1l3 1.3zM755 759V756.9h1l3 2.1zM759 759V757.0h1l3 2.0zM772 759V757.5h1l3 1.5zM776 759V757.4h1l2 1.6zM797 759V757.4h1l3 1.6zM802 759V757.6h1l2 1.4zM807 759V757.2h1l3 1.8zM812 759V757.4h1l2 1.6zM815 759V757.0h1l2 2.0zM819 759V757.5h1l3 1.5zM836 759V756.7h1l3 2.3zM840 759V756.8h1l2 2.2zM844 759V757.2h1l2 1.8zM849 759V757.4h1l3 1.6zM853 759V757.3h1l2 1.7zM864 759V756.9h1l2 2.1zM868 759V757.0h1l2 2.0zM873 759V757.6h1l3 1.4zM878 759V757.2h1l2 1.8zM901 759V757.2h1l2 1.8zM905 759V757.5h1l3 1.5zM909 759V757.5h1l2 1.5zM913 759V757.2h1l2 1.8zM918 759V757.2h1l2 1.8zM928 759V756.7h1l3 2.3zM931 759V757.3h1l2 1.7zM934 759V756.8h1l3 2.2zM939 759V756.8h1l3 2.2zM943 759V757.5h1l3 1.5zM962 759V756.8h1l3 2.2zM966 759V757.7h1l3 1.3zM969 759V756.8h1l2 2.2zM972 759V757.8h1l2 1.2zM981 759V757.5h1l3 1.5zM985 759V757.1h1l2 1.9zM990 759V757.0h1l2 2.0zM994 759V757.0h1l3 2.0zM997 759V757.4h1l3 1.6zM1001 759V757.2h1l2 1.8zM1027 759V757.2h1l2 1.8zM1031 759V756.8h1l3 2.2zM1035 759V757.5h1l3 1.5zM1039 759V757.6h1l2 1.4zM1042 759V757.7h1l2 1.3zM1053 759V757.4h1l3 1.6zM1058 759V757.2h1l2 1.8zM1062 759V757.4h1l2 1.6zM1076 759V757.0h1l3 2.0zM1079 759V757.0h1l3 2.0zM1083 759V756.9h1l3 2.1zM1086 759V757.8h1l3 1.2zM1090 759V757.6h1l2 1.4zM1104 759V756.7h1l2 2.3zM1107 759V757.7h1l3 1.3zM1118 759V757.4h1l3 1.6zM1122 759V757.3h1l3 1.7zM1125 759V757.1h1l2 1.9zM1139 759V757.3h1l3 1.7zM1144 759V756.8h1l2 2.2zM1147 759V757.2h1l2 1.8zM1151 759V756.8h1l3 2.2zM1176 759V756.7h1l3 2.3zM1180 759V756.8h1l2 2.2zM1185 759V757.7h1l3 1.3zM1189 759V757.0h1l2 2.0zM1194 759V757.6h1l2 1.4zM1212 759V757.3h1l2 1.7zM1216 759V756.7h1l2 2.3zM1220 759V757.5h1l3 1.5zM1235 759V757.4h1l2 1.6zM1238 759V757.4h1l3 1.6zM1242 759V757.0h1l3 2.0zM1245 759V757.7h1l2 1.3zM1249 759V757.5h1l3 1.5zM1252 759V757.0h1l3 2.0zM1263 759V757.5h1l3 1.5zM1268 759V756.7h1l2 2.3zM1273 759V756.9h1l2 2.1zM1293 759V757.4h1l2 1.6zM1298 759V757.2h1l2 1.8zM1323 759V757.5h1l3 1.5zM1327 759V757.4h1l3 1.6zM1332 759V757.1h1l3 1.9zM1336 759V757.8h1l2 1.2zM1349 759V757.0h1l3 2.0zM1352 759V756.8h1l3 2.2zM1355 759V757.2h1l3 1.8zM1358 759V756.9h1l2 2.1zM1383 759V756.7h1l2 2.3zM1386 759V757.2h1l3 1.8zM1390 759V756.7h1l2 2.3zM1399 759V757.3h1l2 1.7zM1403 759V756.9h1l3 2.1zM1407 759V757.7h1l3 1.3zM1411 759V757.1h1l3 1.9zM1415 759V757.1h1l3 1.9zM1440 759V756.8h1l2 2.2zM1444 759V757.3h1l3 1.7zM1461 759V757.1h1l2 1.9zM1465 759V757.0h1l2 2.0zM1469 759V757.2h1l2 1.8zM1478 759V757.5h1l3 1.5zM1487 759V757.6h1l3 1.4zM1497 759V757.6h1l2 1.4zM1501 759V757.3h1l3 1.7zM1505 759V757.4h1l3 1.6zM1509 759V756.9h1l2 2.1zM1512 759V757.3h1l2 1.7zM1517 759V757.3h1l3 1.7zM1531 759V757.6h1l3 1.4zM1535 759V757.2h1l2 1.8zM1540 759V757.1h1l2 1.9zM1560 759V757.2h1l3 1.8zM1584 759V756.9h1l2 2.1zM1587 759V757.5h1l2 1.5zM1591 759V757.3h1l3 1.7z"/>
<rect x="134" y="696" width="3" height="64"/>
</g>
<rect x="565" y="682" width="910" height="78" fill="#798d99" fill-opacity=".5"/>
<rect x="88.5" y="681.5" width="1515" height="79" fill="none" stroke="#4b5b65" stroke-width="1"/>
</svg>

<div class="t" style="left:88px;top:779px;font-size:9.3px;color:#4a5963">WINDOW</div>
<div class="t" style="left:850px;top:779px;font-size:9.3px;color:#4a5963">SELECTION</div>

<div class="stat" style="left:88px;width:202px"><div class="v">285.15<small>μA</small></div><div class="l">average</div></div>
<div class="stat" style="left:289px;width:186px"><div class="v">9.99<small>mA</small></div><div class="l">max</div></div>
<div class="stat" style="left:474px;width:183px"><div class="v">13.58<small>s</small></div><div class="l">time</div></div>
<div class="stat" style="left:656px;width:186px"><div class="v">3.87<small>mC</small></div><div class="l">charge</div></div>

<div class="sb" style="left:1404px;width:104px">ZOOM TO SELECTION</div>
<div class="sb" style="left:1507px;width:61px;border-color:#7a8993;color:#3f4e58">SELECT ALL</div>
<div class="sb" style="left:1567px;width:37px">CLEAR</div>

<div class="abs" style="left:850px;top:795px;width:754px;height:58px;background:#cfd7dd;border:1px solid #b2bec5"></div>
<div class="t" style="left:850px;top:818.5px;width:754px;text-align:center;font-size:11.5px;color:#4a5963">Hold SHIFT+LEFT CLICK and DRAG to make a selection</div>

<div class="t" style="left:47px;top:900px;font-size:13px;color:#4a5963">0</div>
<svg class="abs" style="left:0;top:893px" width="1660" height="28" viewBox="0 893 1660 28">
<path d="M92 910.5H1100.5V903.5H1606" stroke="#09a9cf" stroke-width="1.6" fill="none"/>
</svg>
</body></html>
